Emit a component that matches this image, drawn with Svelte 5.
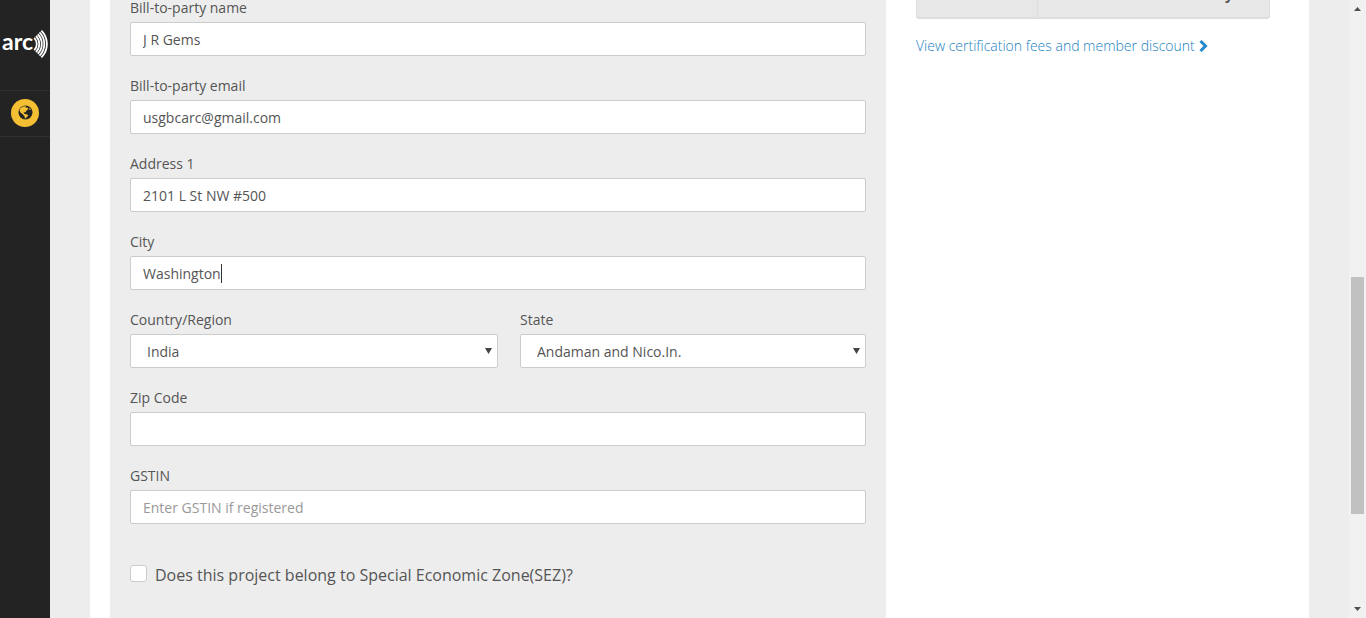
<script>
  const before = [
    { id: 'party-name', label: 'Bill-to-party name', type: 'text', value: 'J R Gems' },
    { id: 'party-email', label: 'Bill-to-party email', type: 'email', value: 'usgbcarc@gmail.com' },
    { id: 'address1', label: 'Address 1', type: 'text', value: '2101 L St NW #500' },
    { id: 'city', label: 'City', type: 'text', value: 'Washington', caret: true }
  ];
  const selects = [
    { id: 'country', label: 'Country/Region', value: 'India' },
    { id: 'state', label: 'State', value: 'Andaman and Nico.In.' }
  ];
  const after = [
    { id: 'zip', label: 'Zip Code', type: 'text', value: '' },
    { id: 'gstin', label: 'GSTIN', type: 'text', value: '', placeholder: 'Enter GSTIN if registered' }
  ];
  // Radii of the sound waves, all centred on (28, 18) and spanning 45 degrees each way
  const waves = [8.8, 11.3, 13.8, 16.3, 18.9].map((r) => {
    const d = r * Math.SQRT1_2;
    return `M${28 + d} ${18 - d}A${r} ${r} 0 0 1 ${28 + d} ${18 + d}`;
  });
</script>

{#snippet field(f)}
  <div class="field">
    <label for={f.id}>{f.label}</label>
    <div class="control">
      <input id={f.id} type={f.type} value={f.value} placeholder={f.placeholder} />
      {#if f.caret}<span class="caret"></span>{/if}
    </div>
  </div>
{/snippet}

<div class="page">
  <nav class="sidebar">
    <a class="logo" href="#home">
      <svg width="50" height="36" viewBox="0 0 50 36">
        <text x="2" y="24" class="wordmark">arc</text>
        <g fill="none" stroke="#fff" stroke-width="1.8">
          {#each waves as d}<path {d} />{/each}
        </g>
      </svg>
    </a>
    <a class="globe" href="#projects" aria-label="Projects">
      <svg width="28" height="28" viewBox="0 0 28 28">
        <circle cx="14" cy="14" r="14" fill="#f4bf33" />
        <circle cx="14.5" cy="13.5" r="7" fill="#232323" />
        <path fill="#f4bf33" d="M9 9.500 L12 7.500 L15 7.300 L14.500 8.800 L16.500 8.500 L17.500 10 L15.500 11.500 L14.500 13.200 L12.500 13.500 L13.500 15 L15.800 15.200 L17.300 16.500 L15.500 18.500 L14.300 19.800 L13.500 17.500 L12 15.500 L9.500 13.500 L8.500 11.500 Z M18.500 8.500 L20 10.500 L18.500 11 Z" />
      </svg>
    </a>
  </nav>

  <main>
    <form class="panel">
      {#each before as f}{@render field(f)}{/each}
      <div class="pair">
        {#each selects as s}
          <div class="field">
            <label for={s.id}>{s.label}</label>
            <div class="control">
              <select id={s.id}><option>{s.value}</option></select>
              <svg class="arrow" width="7" height="6" viewBox="0 0 7 6"><path d="M0 0H7L3.500 6Z" fill="#444" /></svg>
            </div>
          </div>
        {/each}
      </div>
      {#each after as f}{@render field(f)}{/each}
      <div class="check">
        <input id="sez" type="checkbox" />
        <label for="sez">Does this project belong to Special Economic Zone(SEZ)?</label>
      </div>
    </form>

    <aside>
      <div class="total"><div></div><div class="due"><strong>y</strong></div></div>
      <a class="fees" href="#fees">
        View certification fees and member discount
        <svg width="9" height="12" viewBox="0 0 9 12"><path d="M1.500 1 L6.500 6 L1.500 11" fill="none" stroke="#2288c9" stroke-width="3" /></svg>
      </a>
    </aside>
  </main>

  <div class="scrollbar">
    <svg width="7" height="4" viewBox="0 0 7 4"><path d="M0 4H7L3.500 0Z" fill="#505050" /></svg>
    <div class="track"><div class="thumb"></div></div>
    <svg width="7" height="4" viewBox="0 0 7 4"><path d="M0 0H7L3.500 4Z" fill="#505050" /></svg>
  </div>
</div>

<style>
  :global(body) {
    margin: 0;
    background: #ededed;
  }
  .page {
    display: flex;
    height: 100vh;
    overflow: hidden;
    font: 14px/16px "Open Sans", sans-serif;
    color: #555;
  }
  .page *, .page {
    box-sizing: border-box;
  }
  svg {
    display: block;
  }
  .sidebar {
    width: 50px;
    flex: none;
    background: #232323;
  }
  .logo {
    display: block;
    height: 90px;
    padding-top: 26px;
  }
  .wordmark {
    font: 700 23px "Lato", sans-serif;
    fill: #fff;
  }
  .globe {
    display: flex;
    justify-content: center;
    height: 47px;
    padding-top: 8px;
    border-top: 1px solid #303030;
    border-bottom: 1px solid #303030;
  }
  main {
    flex: 1;
    display: grid;
    grid-template-columns: 776fr 354fr;
    gap: 30px;
    margin: 0 40px;
    padding: 0 39px 0 20px;
    background: #fff;
  }
  .panel {
    display: flex;
    flex-direction: column;
    gap: 22px;
    padding: 0 20px;
    background: #ededed;
  }
  .field label {
    display: block;
    margin-bottom: 6px;
  }
  .control {
    position: relative;
  }
  .control input, select {
    display: block;
    width: 100%;
    height: 34px;
    padding: 0 12px;
    border: 1px solid #ccc;
    border-radius: 2px;
    background: #fff;
    color: #555;
    font: inherit;
    outline: none;
    appearance: none;
  }
  .control select {
    padding: 2px 16px 0;
  }
  .control input::placeholder {
    color: #999;
    opacity: 1;
  }
  .caret {
    position: absolute;
    left: 91px;
    top: 8px;
    width: 1px;
    height: 19px;
    background: #333;
  }
  .arrow {
    position: absolute;
    right: 6px;
    top: 14px;
  }
  .pair {
    display: grid;
    grid-template-columns: 368fr 346fr;
    gap: 22px;
  }
  .check {
    display: flex;
    align-items: flex-start;
    gap: 8px;
    margin-top: 18px;
    font-size: 16px;
    line-height: 22px;
  }
  .check input {
    width: 17px;
    height: 17px;
    margin: 1px 0 0;
    border: 1px solid #ccc;
    border-radius: 3px;
    background: #fff;
    appearance: none;
  }
  .total {
    display: grid;
    grid-template-columns: 120px 1fr;
    height: 19px;
    border: 1px solid #ddd;
    border-top: 0;
    border-bottom-width: 2px;
    border-radius: 0 0 3px 3px;
    background: #e7e7e7;
  }
  .due {
    display: flex;
    align-items: flex-end;
    flex-direction: column;
    overflow: hidden;
    padding-right: 36px;
    border-left: 1px solid #ddd;
  }
  .due strong {
    margin-top: -13px;
  }
  .fees {
    display: flex;
    align-items: center;
    gap: 4px;
    margin-top: 19px;
    font-weight: 300;
    color: #1b7fc0;
    text-decoration: none;
    white-space: nowrap;
  }
  .scrollbar {
    width: 17px;
    flex: none;
    display: flex;
    flex-direction: column;
    align-items: center;
    padding: 7px 0;
    background: #f1f1f1;
  }
  .track {
    flex: 1;
    width: 13px;
    display: grid;
    grid-template-rows: 266fr 237fr 93fr;
  }
  .thumb {
    grid-row: 2;
    background: #c1c1c1;
  }
</style>
